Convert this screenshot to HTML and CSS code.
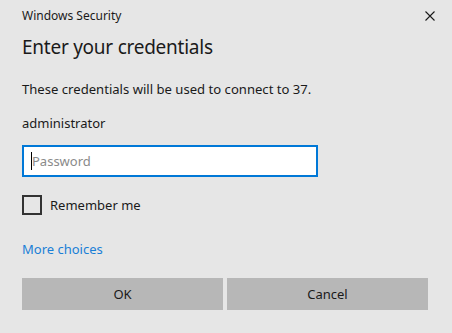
FILE: index.html
```html
<!DOCTYPE html>
<html>
<head>
<meta charset="utf-8">
<link rel="stylesheet" href="styles.css">
</head>
<body>
<div class="dialog">
  <div class="titlebar">
    <span class="app">Windows Security</span>
    <span class="close"><svg width="10" height="10" viewBox="0 0 10 10"><path d="M0.5 0.5L9.5 9.5M9.5 0.5L0.5 9.5" stroke="#1a1a1a" stroke-width="1.1"/></svg></span>
  </div>
  <h1 class="heading">Enter your credentials</h1>
  <p class="info">These credentials will be used to connect to 37.</p>
  <p class="user">administrator</p>
  <div class="field"><span class="caret"></span><span class="placeholder">Password</span></div>
  <label class="remember"><span class="box"></span><span>Remember me</span></label>
  <a class="more">More choices</a>
  <div class="buttons">
    <button class="btn">OK</button>
    <button class="btn">Cancel</button>
  </div>
</div>
</body>
</html>
```
FILE: styles.css
```css
html, body { margin: 0; padding: 0; }
body { background: #e6e6e6; font-family: "Noto Sans", "Open Sans", sans-serif; color: #1a1a1a; width: 452px; height: 333px; overflow: hidden; }
.dialog { padding: 0 24px 0 22px; }
.titlebar { display: flex; justify-content: space-between; align-items: center; height: 31px; }
.app { font-size: 12px; }
.close { display: flex; margin-right: -7px; }
.heading { margin: 2px 0 0 0; font-size: 19px; letter-spacing: -0.25px; font-weight: 400; line-height: 28px; }
.info { margin: 19px 0 0 0; font-size: 13.1px; line-height: 18px; }
.user { margin: 16px 0 0 0; font-size: 13px; line-height: 18px; }
.field { margin-top: 13px; width: 296px; height: 32px; border: 2px solid #0078d7; background: #fff; display: flex; align-items: center; padding-left: 7px; box-sizing: border-box; }
.caret { width: 1px; height: 18px; background: #000; margin-right: 0; }
.placeholder { color: #8a8a8a; font-size: 13px; }
.remember { display: flex; align-items: center; margin-top: 18px; font-size: 13px; gap: 8px; }
.box { width: 16px; height: 16px; border: 2px solid #333; }
.more { display: block; margin-top: 25px; color: #1a7fd6; font-size: 13px; line-height: 18px; }
.buttons { display: grid; grid-template-columns: 201px 201px; gap: 4px; margin-top: 20px; }
.btn { height: 32px; background: #b7b7b7; border: none; font-family: inherit; font-size: 13px; color: #1a1a1a; padding: 0; }
```
